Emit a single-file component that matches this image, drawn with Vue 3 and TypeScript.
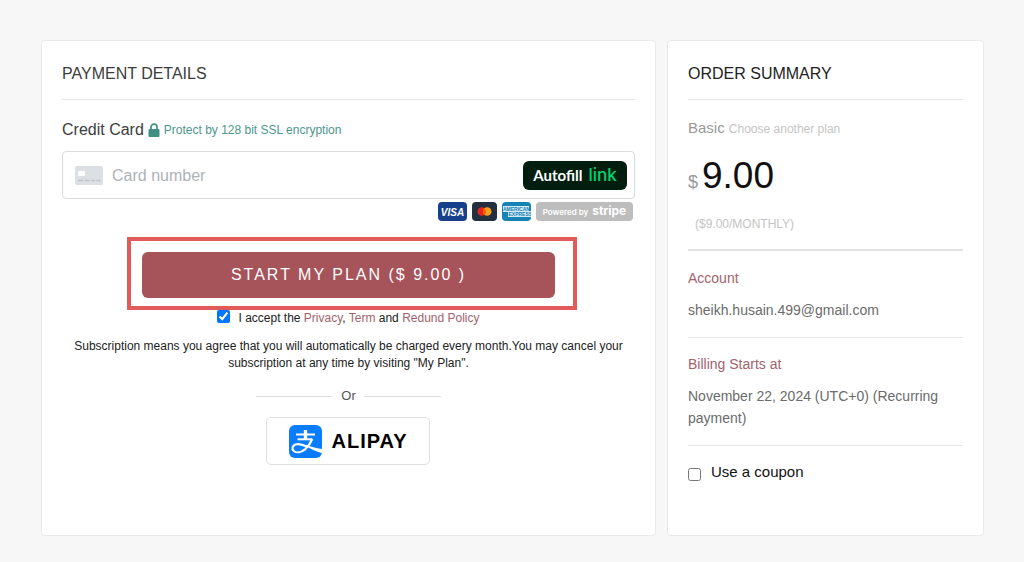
<script setup lang="ts">
import { ref } from 'vue'

const price = '9.00'
const cardNumber = ref('')
const accepted = ref(true)
const useCoupon = ref(false)
</script>

<template>
  <main class="page">
    <section class="panel">
      <h2 class="title">PAYMENT DETAILS</h2>

      <div class="method">
        <label for="card-number">Credit Card</label>
        <svg class="lock" viewBox="0 0 12 14" aria-hidden="true">
          <path d="M3 7V4.200a3 3 0 0 1 6 0V7" fill="none" stroke="#3f8f86" stroke-width="1.700" />
          <rect x="0.500" y="6" width="11" height="8" rx="1" fill="#3f8f86" />
        </svg>
        <span class="secure">Protect by 128 bit SSL encryption</span>
      </div>

      <div class="card-field">
        <svg class="card-icon" viewBox="0 0 28 19" aria-hidden="true">
          <rect width="28" height="19" rx="2" fill="#dcdfe3" />
          <rect x="3" y="5" width="7" height="5" rx="1" fill="#fff" />
          <path d="M3 14.500h5M9.500 14.500h5M16 14.500h4M21.500 14.500h4" stroke="#bfc3c8" stroke-width="1.500" />
        </svg>
        <input id="card-number" v-model="cardNumber" type="text" inputmode="numeric" placeholder="Card number" />
        <button type="button" class="autofill"><span>Autofill</span><span class="link-brand">link</span></button>
      </div>

      <div class="brands">
        <svg class="brand" viewBox="0 0 29 19" role="img" aria-label="Visa">
          <rect width="29" height="19" rx="4" fill="#17408b" />
          <text x="14.500" y="13.500" text-anchor="middle" class="visa">VISA</text>
        </svg>
        <svg class="brand brand-mc" viewBox="0 0 25 19" role="img" aria-label="Mastercard">
          <rect width="25" height="19" rx="4" fill="#25303f" />
          <circle cx="9.800" cy="9.500" r="4.300" fill="#e8231f" />
          <circle cx="15.200" cy="9.500" r="4.300" fill="#f79e1b" />
          <path d="M12.500 6.200a4.300 4.300 0 0 1 0 6.600a4.300 4.300 0 0 1 0-6.600" fill="#ff5f00" />
        </svg>
        <svg class="brand" viewBox="0 0 29 19" role="img" aria-label="American Express">
          <rect width="29" height="19" rx="4" fill="#1683b5" />
          <path d="M1 4h26v5h2v6H6v-5H1z" fill="#d3e9f3" />
          <text x="1" y="9" class="amex">AMERICAN</text>
          <text x="6.500" y="14.300" class="amex">EXPRESS</text>
        </svg>
        <span class="powered">Powered by <b>stripe</b></span>
      </div>

      <div class="pay">
        <button type="button" class="start">START MY PLAN ($ {{ price }} )</button>
        <div class="highlight"></div>
      </div>

      <div class="accept">
        <input id="accept" v-model="accepted" type="checkbox" />
        <label for="accept">I accept the <a href="#privacy">Privacy</a>, <a href="#term">Term</a> and <a href="#refund">Redund Policy</a></label>
      </div>

      <p class="terms">
        Subscription means you agree that you will automatically be charged every month.You may cancel your
        subscription at any time by visiting "My Plan".
      </p>

      <div class="divider"><span>Or</span></div>

      <button type="button" class="alipay">
        <svg class="alipay-logo" viewBox="0 0 33 33" aria-hidden="true">
          <rect width="33" height="33" rx="6" fill="#0a7cff" />
          <g fill="none" stroke="#fff">
            <path d="M16.500 5v9" stroke-width="3.400" />
            <path d="M7 9.500h19" stroke-width="2" />
            <path d="M8.500 14.300h14.800" stroke-width="2" />
            <path d="M23.200 14c-1.500 4-4 7.500-7.200 10.300c-3.600 3-8.300 4-11.200 1.700c-2.300-1.900-1.500-5.300 1.600-6.500c3.600-1.400 8.100.5 12.400 2.500" stroke-width="2.200" />
          </g>
          <path d="M17 20c5 1.700 9.500 3 16 4v4.200c-5.500-1.700-11-4.200-16-6.700z" fill="#fff" />
        </svg>
        <span>ALIPAY</span>
      </button>
    </section>

    <aside class="panel">
      <h2 class="title title-dark">ORDER SUMMARY</h2>
      <div class="plan">Basic <a href="#plans">Choose another plan</a></div>
      <div class="price"><span>$</span> {{ price }}</div>
      <div class="period">(${{ price }}/MONTHLY)</div>

      <section class="block block-first">
        <h3>Account</h3>
        <p>sheikh.husain.499@gmail.com</p>
      </section>
      <section class="block">
        <h3>Billing Starts at</h3>
        <p>November 22, 2024 (UTC+0) (Recurring payment)</p>
      </section>
      <div class="block coupon">
        <input id="coupon" v-model="useCoupon" type="checkbox" />
        <label for="coupon">Use a coupon</label>
      </div>
    </aside>
  </main>
</template>

<style>
body {
  margin: 0;
  background: #f7f7f7;
}
</style>

<style scoped>
.page {
  box-sizing: border-box;
  min-height: 100vh;
  padding: 40px 40px 26px 41px;
  display: grid;
  grid-template-columns: minmax(0, 194fr) minmax(0, 100fr);
  gap: 11px;
  font-family: "Liberation Sans", Arial, sans-serif;
  color: #222;
}
.panel {
  box-sizing: border-box;
  padding: 22px 20px 48px;
  background: #fff;
  border: 1px solid #e9e9e9;
  border-radius: 4px;
}
h2,
h3,
p {
  margin: 0;
  font-weight: 400;
}
a {
  color: #a5626d;
  text-decoration: none;
}
button {
  font-family: inherit;
  cursor: pointer;
}
.title {
  font-size: 16px;
  line-height: 22px;
  padding-bottom: 14px;
  border-bottom: 1px solid #e6e6e6;
  color: #3c3c3c;
}
.title-dark {
  color: #222;
}
.method {
  display: flex;
  align-items: center;
  gap: 4px;
  margin-top: 19px;
  font-size: 16px;
  line-height: 22px;
  color: #3c3c3c;
}
.lock {
  width: 12px;
  height: 14px;
}
.secure {
  font-size: 12px;
  color: #4d968d;
}
.card-field {
  box-sizing: border-box;
  display: flex;
  align-items: center;
  gap: 9px;
  height: 48px;
  margin-top: 10px;
  padding: 0 7px 0 12px;
  border: 1px solid #d9dcde;
  border-radius: 4px;
}
.card-icon {
  flex: none;
  width: 28px;
  height: 19px;
}
.card-field input {
  flex: 1;
  min-width: 0;
  padding: 2px 0 0;
  border: 0;
  outline: 0;
  font: 16px "Liberation Sans", Arial, sans-serif;
}
.card-field input::placeholder {
  color: #aeb2b7;
}
.autofill {
  display: flex;
  align-items: baseline;
  justify-content: center;
  gap: 6px;
  width: 104px;
  height: 29px;
  padding: 0;
  border: 0;
  border-radius: 6px;
  background: #011e0f;
  color: #fff;
  font: 700 15px/28px Lato, sans-serif;
  white-space: nowrap;
}
.link-brand {
  color: #00d66f;
  font-family: Inter, sans-serif;
  font-size: 17px;
  font-weight: 500;
}
.brands {
  display: flex;
  justify-content: flex-end;
  gap: 5px;
  height: 19px;
  margin-top: 3px;
  padding-right: 2px;
}
.brand {
  width: 29px;
  height: 19px;
}
.brand-mc {
  width: 25px;
}
.visa {
  font: italic 700 10px "Liberation Sans", sans-serif;
  fill: #fff;
}
.amex {
  font: 700 5px "Liberation Sans", sans-serif;
  fill: #1683b5;
}
.powered {
  display: flex;
  align-items: baseline;
  justify-content: center;
  gap: 4px;
  width: 97px;
  border-radius: 4px;
  background: #bdbdbd;
  color: #fff;
  font: 600 8px/18px Inter, sans-serif;
  white-space: nowrap;
}
.powered b {
  font-size: 12px;
  font-weight: 700;
}
.pay {
  position: relative;
  width: 72%;
  margin: 31px auto 0;
}
.start {
  display: block;
  width: 100%;
  height: 46px;
  padding: 0;
  border: 0;
  border-radius: 6px;
  background: #a65359;
  color: #fff;
  font-size: 16px;
  letter-spacing: 2px;
}
.highlight {
  position: absolute;
  inset: -15px -22px -12px -15px;
  border: 4px solid #e25b5b;
  pointer-events: none;
}
.accept {
  display: flex;
  justify-content: center;
  gap: 8px;
  margin-top: 11px;
  font-size: 12px;
  line-height: 18px;
}
.accept input,
.coupon input {
  flex: none;
  width: 13px;
  height: 13px;
  margin: 1px 0 0;
}
.terms {
  margin-top: 11px;
  font-size: 12px;
  line-height: 17px;
  text-align: center;
}
.divider {
  display: flex;
  align-items: center;
  gap: 8px;
  width: 184px;
  margin: 15px auto 0;
  font-size: 13px;
  line-height: 18px;
  color: #555;
}
.divider::before,
.divider::after {
  content: "";
  flex: 1;
  height: 1px;
  background: #dedede;
}
.alipay {
  display: flex;
  align-items: center;
  justify-content: center;
  gap: 9px;
  width: 164px;
  height: 48px;
  margin: 12px auto 0;
  padding: 0;
  border: 1px solid #dedede;
  border-radius: 5px;
  background: #fff;
  color: #000;
  font-size: 20px;
  font-weight: 700;
  letter-spacing: 1px;
}
.alipay-logo {
  width: 33px;
  height: 33px;
}
.plan {
  margin-top: 17px;
  font-size: 15px;
  line-height: 22px;
  color: #999;
}
.plan a {
  font-size: 12px;
  color: #c4c4c4;
}
.price {
  display: flex;
  align-items: baseline;
  gap: 4px;
  margin-top: 13px;
  font-size: 37px;
  line-height: 46px;
  color: #111;
}
.price span {
  font-size: 18px;
  color: #999;
}
.period {
  margin: 10px 0 0 7px;
  font-size: 12px;
  line-height: 18px;
  color: #c4c4c4;
}
.block {
  margin-top: 16px;
  padding-top: 15px;
  border-top: 1px solid #e6e6e6;
  font-size: 14px;
  line-height: 22px;
}
.block-first {
  padding-top: 16px;
  border-top: 2px solid #e2e2e2;
}
.block h3 {
  font-size: 14px;
  color: #a5626d;
}
.block p {
  margin-top: 10px;
  color: #6b6b6b;
}
.coupon {
  display: flex;
  align-items: center;
  gap: 10px;
  font-size: 15px;
  color: #111;
}
.coupon input {
  margin-top: 4px;
}
</style>
